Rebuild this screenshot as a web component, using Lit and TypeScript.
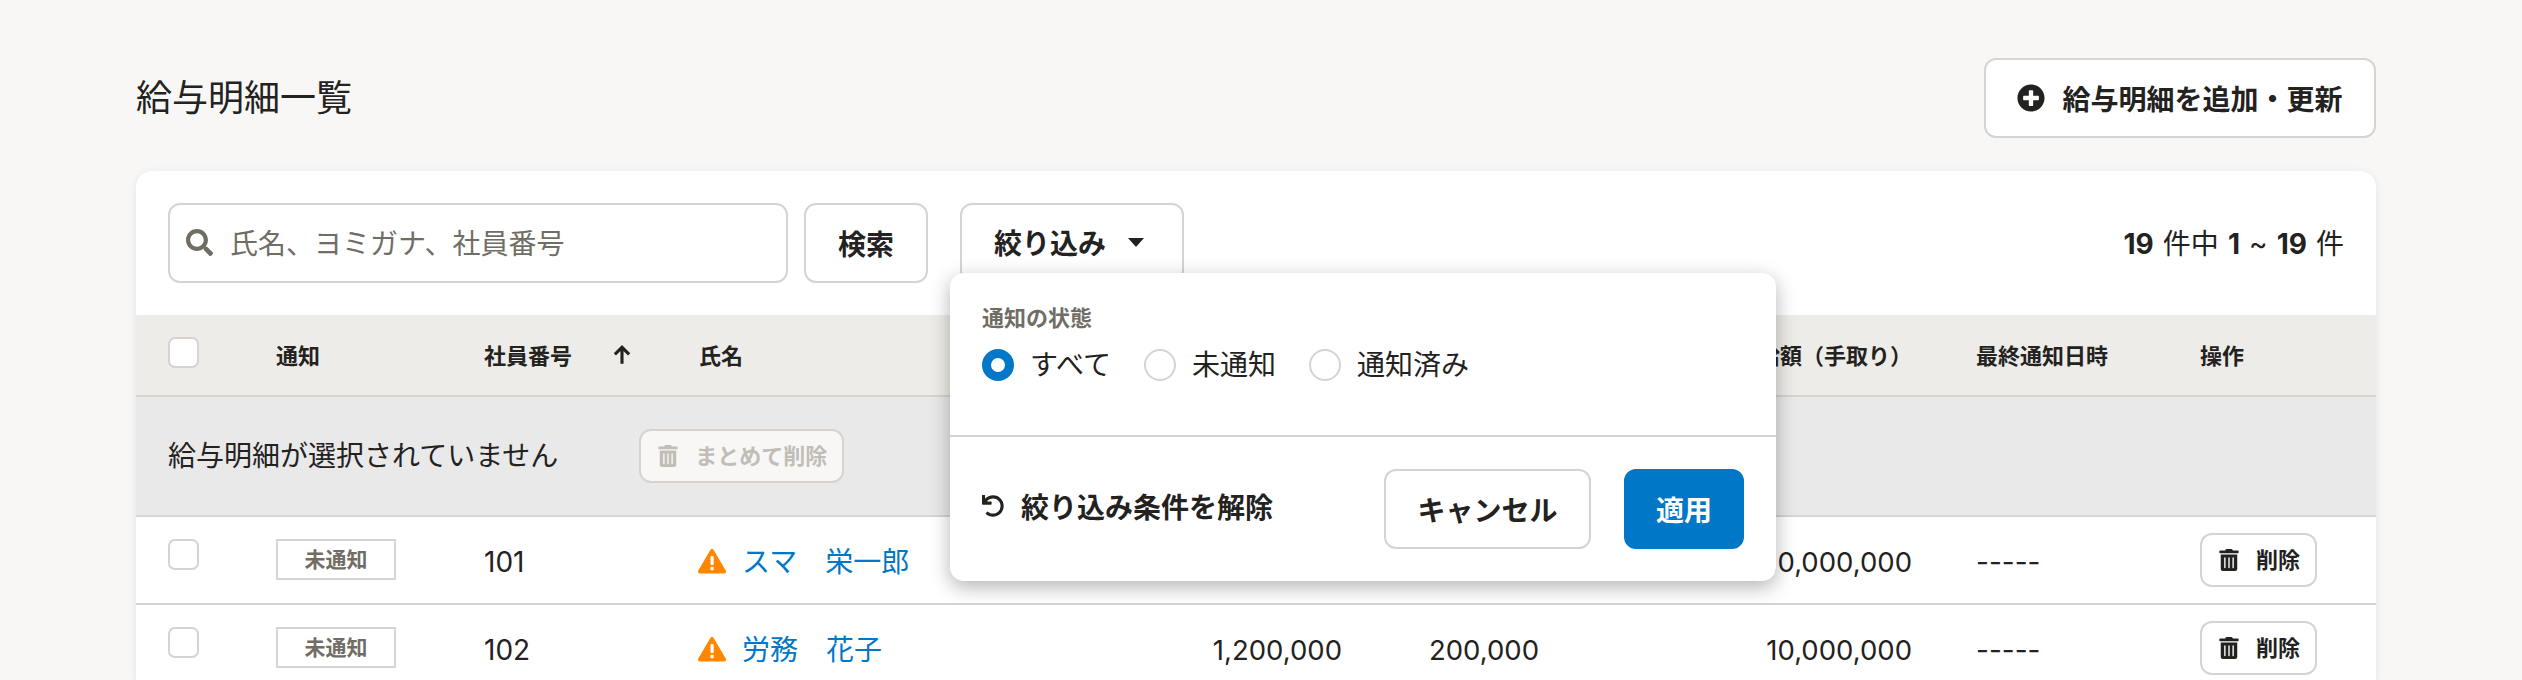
import { LitElement, html, css, svg } from 'lit';
import { customElement, state } from 'lit/decorators.js';

const TRASH = svg`<path d="M32 464a48 48 0 0 0 48 48h288a48 48 0 0 0 48-48V128H32zm272-256a16 16 0 0 1 32 0v224a16 16 0 0 1-32 0zm-96 0a16 16 0 0 1 32 0v224a16 16 0 0 1-32 0zm-96 0a16 16 0 0 1 32 0v224a16 16 0 0 1-32 0zM432 32H312l-9.4-18.7A24 24 0 0 0 281.1 0H166.8a23.72 23.72 0 0 0-21.4 13.3L136 32H16A16 16 0 0 0 0 48v32a16 16 0 0 0 16 16h416a16 16 0 0 0 16-16V48a16 16 0 0 0-16-16z"/>`;

const trashIcon = html`<svg class="trash" viewBox="0 0 448 512" fill="currentColor">${TRASH}</svg>`;

interface Payslip {
  id: string;
  name: string;
  gross: string;
  deduction: string;
  net: string;
}

const PAYSLIPS: Payslip[] = [
  { id: '101', name: 'スマ　栄一郎', gross: '1,200,000', deduction: '200,000', net: '10,000,000' },
  { id: '102', name: '労務　花子', gross: '1,200,000', deduction: '200,000', net: '10,000,000' },
];

@customElement('app-root')
export class AppRoot extends LitElement {
  @state() notifyFilter = 'all';

  static styles = css`
    :host {
      display: block;
      height: 680px;
      overflow: hidden;
      background: #f8f7f6;
      color: #23221e;
      font-family: 'Inter', 'Noto Sans CJK JP', sans-serif;
      font-size: 28px;
    }
    .page {
      padding: 58px 146px 0 136px;
    }
    .head {
      display: flex;
      align-items: center;
      justify-content: space-between;
      margin-bottom: 33px;
    }
    h1 {
      margin: 0;
      font-size: 36px;
      font-weight: 400;
      line-height: 1.3;
    }
    .btn {
      display: inline-flex;
      align-items: center;
      justify-content: center;
      box-sizing: border-box;
      height: 80px;
      padding-bottom: 2px;
      border: 2px solid #d6d3d0;
      border-radius: 12px;
      background: #fff;
      color: #23221e;
      font: inherit;
      font-weight: 700;
      white-space: nowrap;
    }
    .add {
      width: 392px;
      gap: 17px;
    }
    .add svg {
      width: 28px;
      height: 28px;
    }
    .card {
      background: #fff;
      border-radius: 16px;
      box-shadow: 0 2px 8px rgba(0, 0, 0, 0.08);
    }
    .toolbar {
      display: flex;
      align-items: center;
      padding: 32px;
    }
    .search {
      display: flex;
      align-items: center;
      gap: 17px;
      box-sizing: border-box;
      width: 620px;
      height: 80px;
      padding: 0 16px 2px;
      border: 2px solid #d6d3d0;
      border-radius: 12px;
      color: #706d65;
    }
    .search svg {
      width: 27px;
      height: 27px;
      flex: none;
    }
    .search-btn {
      width: 124px;
      margin-left: 16px;
    }
    .filter {
      position: relative;
      margin-left: 32px;
    }
    .filter-btn {
      justify-content: flex-start;
      width: 224px;
      padding: 0 32px 2px;
      gap: 22px;
    }
    .caret {
      width: 16px;
      height: 9px;
    }
    .count {
      margin: 0 0 2px auto;
      word-spacing: 1.2px;
    }
    .count b {
      font-weight: 700;
    }
    table {
      width: 100%;
      table-layout: fixed;
      border-collapse: separate;
      border-spacing: 0;
    }
    th {
      box-sizing: border-box;
      height: 82px;
      padding: 0 32px 3px;
      background: #edecE8;
      border-bottom: 2px solid #d6d3d0;
      font-size: 22px;
      font-weight: 700;
      text-align: left;
      white-space: nowrap;
    }
    th .check {
      margin-top: -3px;
    }
    .sort {
      display: flex;
      align-items: center;
      justify-content: space-between;
    }
    .sort svg {
      width: 22px;
      height: 22px;
      margin: 3px 2px 0 0;
    }
    .num {
      text-align: right;
    }
    td.num {
      font-size: 27.5px;
    }
    .bulk td {
      box-sizing: border-box;
      height: 120px;
      padding: 0 32px;
      background: #e9e9e9;
      vertical-align: middle;
    }
    .bulk-inner {
      display: flex;
      align-items: center;
      gap: 81px;
    }
    .bulk-btn {
      display: inline-flex;
      align-items: center;
      gap: 17px;
      box-sizing: border-box;
      width: 205px;
      height: 54px;
      padding: 0 17px;
      border: 2px solid #d6d3d0;
      border-radius: 12px;
      background: #f8f7f6;
      color: #c1bdb7;
      font-size: 22px;
      font-weight: 700;
    }
    .trash {
      width: 20px;
      height: 22px;
      flex: none;
    }
    td {
      box-sizing: border-box;
      height: 88px;
      padding: 22px 32px 18px;
      border-bottom: 2px solid #d6d3d0;
      line-height: 46px;
      vertical-align: top;
      white-space: nowrap;
    }
    .check {
      display: block;
      box-sizing: border-box;
      width: 31px;
      height: 31px;
      border: 2px solid #d6d3d0;
      border-radius: 7px;
      background: #fff;
    }
    .badge {
      display: flex;
      align-items: center;
      justify-content: center;
      box-sizing: border-box;
      width: 120px;
      height: 41px;
      border: 2px solid #d6d3d0;
      color: #706d65;
      font-size: 21px;
      font-weight: 700;
      line-height: 1;
    }
    .name {
      display: flex;
      align-items: center;
      gap: 16px;
      color: #0077c7;
    }
    .warn {
      width: 28px;
      height: 26px;
      flex: none;
      margin: -2px 0 0 -1px;
    }
    td.actions {
      padding: 16px 32px 0;
    }
    .delete {
      display: inline-flex;
      align-items: center;
      gap: 17px;
      box-sizing: border-box;
      width: 117px;
      height: 54px;
      padding: 0 17px;
      border: 2px solid #d6d3d0;
      border-radius: 12px;
      background: #fff;
      font-size: 22px;
      font-weight: 700;
      line-height: 1;
    }
    .popover {
      position: absolute;
      top: 70px;
      left: -10px;
      z-index: 10;
      width: 826px;
      background: #fff;
      border-radius: 14px;
      box-shadow: 0 6px 20px rgba(0, 0, 0, 0.3);
    }
    .pop-body {
      box-sizing: border-box;
      height: 162px;
      padding: 32px 32px 0;
    }
    .pop-label {
      margin-bottom: 18px;
      color: #706d65;
      font-size: 22px;
      font-weight: 700;
      line-height: 26px;
    }
    .radios {
      display: flex;
      gap: 33px;
    }
    .radio {
      display: flex;
      align-items: center;
      gap: 16px;
      line-height: 32px;
    }
    .dot {
      box-sizing: border-box;
      width: 32px;
      height: 32px;
      border: 2px solid #d6d3d0;
      border-radius: 50%;
      background: #fff;
    }
    .dot.on {
      border: 9px solid #0077c7;
    }
    .pop-foot {
      display: flex;
      align-items: center;
      padding: 32px;
      border-top: 2px solid #d6d3d0;
    }
    .reset {
      display: flex;
      align-items: center;
      gap: 17px;
      margin-right: auto;
      font-weight: 700;
      transform: translateY(-3px);
    }
    .reset svg {
      width: 22px;
      height: 22px;
    }
    .cancel {
      width: 207px;
    }
    .apply {
      width: 120px;
      margin-left: 33px;
      border-color: #0077c7;
      background: #0077c7;
      color: #fff;
    }
  `;

  private renderPopover() {
    const options = [
      { value: 'all', label: 'すべて' },
      { value: 'unsent', label: '未通知' },
      { value: 'sent', label: '通知済み' },
    ];
    return html`
      <div class="popover">
        <div class="pop-body">
          <div class="pop-label">通知の状態</div>
          <div class="radios">
            ${options.map(
              (o) => html`
                <div class="radio" @click=${() => (this.notifyFilter = o.value)}>
                  <span class="dot ${this.notifyFilter === o.value ? 'on' : ''}"></span>${o.label}
                </div>
              `
            )}
          </div>
        </div>
        <div class="pop-foot">
          <div class="reset">
            <svg viewBox="0 0 512 512" fill="currentColor">
              <path
                d="M212.333 224.333H12c-6.627 0-12-5.373-12-12V12C0 5.373 5.373 0 12 0h48c6.627 0 12 5.373 12 12v78.112C117.773 39.279 184.26 7.47 258.175 8.007c136.906.994 246.448 111.623 246.157 248.532C504.041 393.258 393.12 504 256.333 504c-64.089 0-122.496-24.313-166.51-64.215-5.099-4.622-5.334-12.554-.467-17.42l33.967-33.967c4.474-4.474 11.662-4.717 16.401-.525C170.76 415.336 211.58 432 256.333 432c97.268 0 176-78.716 176-176 0-97.267-78.716-176-176-176-58.496 0-110.28 28.476-142.274 72.333h98.274c6.627 0 12 5.373 12 12v48c0 6.627-5.373 12-12 12z"
              />
            </svg>
            絞り込み条件を解除
          </div>
          <button class="btn cancel">キャンセル</button>
          <button class="btn apply">適用</button>
        </div>
      </div>
    `;
  }

  private renderRow(p: Payslip) {
    return html`
      <tr>
        <td><span class="check"></span></td>
        <td><span class="badge">未通知</span></td>
        <td>${p.id}</td>
        <td>
          <div class="name">
            <svg class="warn" viewBox="0 0 28 26">
              <path d="M14 3 L26 23.500 H2 Z" fill="#ff8800" stroke="#ff8800" stroke-width="4" stroke-linejoin="round" />
              <rect x="12.500" y="8" width="3.200" height="9" rx="1" fill="#fff" />
              <rect x="12.500" y="18.800" width="3.200" height="3.400" rx="1" fill="#fff" />
            </svg>
            ${p.name}
          </div>
        </td>
        <td class="num">${p.gross}</td>
        <td class="num">${p.deduction}</td>
        <td class="num">${p.net}</td>
        <td>-----</td>
        <td class="actions">
          <span class="delete">${trashIcon}削除</span>
        </td>
      </tr>
    `;
  }

  render() {
    return html`
      <div class="page">
        <div class="head">
          <h1>給与明細一覧</h1>
          <button class="btn add">
            <svg viewBox="0 0 512 512" fill="currentColor">
              <path
                d="M256 8C119 8 8 119 8 256s111 248 248 248 248-111 248-248S393 8 256 8zm144 276c0 6.600-5.400 12-12 12h-92v92c0 6.600-5.400 12-12 12h-56c-6.600 0-12-5.400-12-12v-92h-92c-6.600 0-12-5.400-12-12v-56c0-6.600 5.400-12 12-12h92v-92c0-6.600 5.400-12 12-12h56c6.600 0 12 5.400 12 12v92h92c6.600 0 12 5.400 12 12v56z"
              />
            </svg>
            給与明細を追加・更新
          </button>
        </div>
        <div class="card">
          <div class="toolbar">
            <div class="search">
              <svg viewBox="0 0 512 512" fill="currentColor">
                <path
                  d="M505 442.700L405.300 343c-4.500-4.500-10.600-7-17-7H372c27.600-35.300 44-79.700 44-128C416 93.100 322.900 0 208 0S0 93.100 0 208s93.100 208 208 208c48.300 0 92.700-16.400 128-44v16.300c0 6.400 2.500 12.500 7 17l99.700 99.700c9.400 9.400 24.600 9.400 33.900 0l28.300-28.300c9.400-9.400 9.400-24.600.1-34zM208 336c-70.700 0-128-57.200-128-128 0-70.700 57.200-128 128-128 70.700 0 128 57.200 128 128 0 70.700-57.200 128-128 128z"
                />
              </svg>
              氏名、ヨミガナ、社員番号
            </div>
            <button class="btn search-btn">検索</button>
            <div class="filter">
              <button class="btn filter-btn">
                絞り込み
                <svg class="caret" viewBox="0 0 16 9" fill="currentColor"><path d="M0 0h16L8 9z" /></svg>
              </button>
              ${this.renderPopover()}
            </div>
            <div class="count"><b>19</b> 件中 <b>1</b> ~ <b>19</b> 件</div>
          </div>
          <table>
            <colgroup>
              <col style="width:108px" />
              <col style="width:208px" />
              <col style="width:215px" />
              <col style="width:484px" />
              <col style="width:223px" />
              <col style="width:197px" />
              <col style="width:373px" />
              <col style="width:224px" />
              <col />
            </colgroup>
            <thead>
              <tr>
                <th><span class="check"></span></th>
                <th>通知</th>
                <th>
                  <div class="sort">
                    社員番号
                    <svg viewBox="0 0 20 20" fill="none" stroke="currentColor" stroke-width="2.800">
                      <path d="M10 18V3M3.500 9.500L10 3l6.500 6.500" />
                    </svg>
                  </div>
                </th>
                <th>氏名</th>
                <th class="num">総支給額</th>
                <th class="num">控除額</th>
                <th class="num">差引支給額（手取り）</th>
                <th>最終通知日時</th>
                <th>操作</th>
              </tr>
            </thead>
            <tbody>
              <tr class="bulk">
                <td colspan="9">
                  <div class="bulk-inner">
                    給与明細が選択されていません
                    <span class="bulk-btn">${trashIcon}まとめて削除</span>
                  </div>
                </td>
              </tr>
              ${PAYSLIPS.map((p) => this.renderRow(p))}
            </tbody>
          </table>
        </div>
      </div>
    `;
  }
}
